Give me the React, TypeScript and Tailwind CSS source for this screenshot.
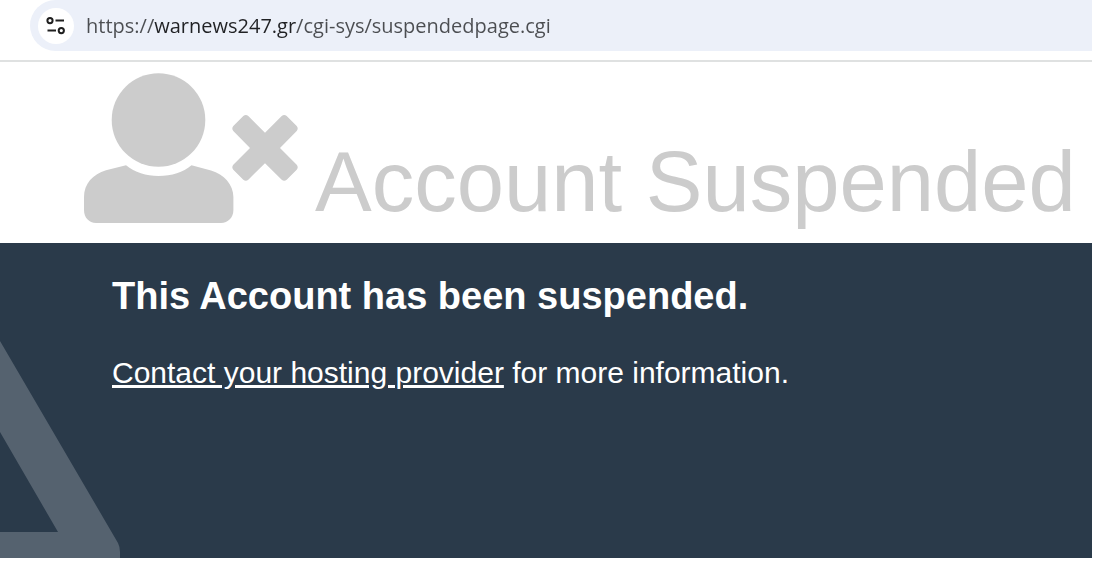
import type { SVGProps } from "react";

const PAGE_URL = "https://warnews247.gr/cgi-sys/suspendedpage.cgi";

function SiteSettingsIcon(props: SVGProps<SVGSVGElement>) {
  return (
    <svg viewBox="0 0 20 18" fill="none" stroke="currentColor" strokeWidth="2" aria-hidden="true" {...props}>
      <circle cx="4" cy="3.6" r="2.6" />
      <path d="M9.5 3.6H18M1.500 13.600h8.500" />
      <circle cx="15.3" cy="13.6" r="2.6" />
    </svg>
  );
}

function UserTimesIcon(props: SVGProps<SVGSVGElement>) {
  return (
    <svg viewBox="0 0 214 151" fill="currentColor" aria-hidden="true" {...props}>
      <circle cx="74.5" cy="48" r="46.8" />
      <path d="M42 93.3 C51 100.500 62 104 74.500 104 C88 104 99 100.500 107.500 93.300 L127 98.500 C140 102.500 149.400 112.500 149.400 125 V138 C149.400 145.500 144 151 137 151 H12 C5 151 0 145.500 0 138 V125 C0 112 9 102 22 98.300 Z" />
      <path d="M159.300 44 Q161.800 42 164.300 44 L181 60.700 L197.700 44 Q200.200 42 202.700 44 L212.700 54 Q214.700 56.500 212.700 59 L196 76 L212.700 92.700 Q214.700 95.200 212.700 97.700 L202.700 107.700 Q200.200 109.700 197.700 107.700 L181 91.200 L164.300 107.700 Q161.800 109.700 159.300 107.700 L149.300 97.700 Q147.300 95.200 149.300 92.700 L166 76 L149.300 59 Q147.300 56.500 149.300 54 Z" />
    </svg>
  );
}

function AddressBar() {
  return (
    <div className="border-b-2 border-[#dfe1e1] pb-[9px] pl-[30px]">
      <div className="flex h-[51px] items-center rounded-l-full bg-[#ecf0f9] pl-2">
        <button
          type="button"
          aria-label="View site information"
          className="flex size-9 shrink-0 items-center justify-center rounded-full bg-white text-[#1f1f1f]"
        >
          <SiteSettingsIcon className="h-[18px] w-5" />
        </button>
        {/* host part of the address is darker than the scheme and path */}
        <input
          type="text"
          aria-label="Address"
          readOnly
          defaultValue={PAGE_URL}
          className="ml-3 min-w-0 flex-1 bg-[linear-gradient(90deg,#4b4d51_68px,#202124_68px,#202124_210px,#4b4d51_210px)] bg-clip-text font-['Open_Sans','Noto_Sans',sans-serif] text-[20px] leading-8 text-transparent outline-none"
        />
      </div>
    </div>
  );
}

export default function App() {
  return (
    <div className="bg-white pr-3 font-['Liberation_Sans',Arial,sans-serif]">
      <AddressBar />

      <header className="flex items-end pt-[10px] pb-5 pl-[84px] text-[#cccccc]">
        <UserTimesIcon className="h-[151px] w-[214px] shrink-0" />
        <h1 className="ml-[17px] text-[85px] leading-[82px] whitespace-nowrap">Account Suspended</h1>
      </header>

      <main className="relative overflow-hidden bg-[#2a3a4a] px-28 pt-8 pb-[165px] text-white">
        <svg
          viewBox="0 0 120 217"
          fill="#55626f"
          aria-hidden="true"
          className="absolute bottom-0 left-0 h-[217px] w-[120px]"
        >
          <path d="M0 0 L118 202 Q120 206 120 211 V217 H0 V191 H58 L0 91 Z" />
        </svg>
        <div className="relative">
          <h2 className="text-[38px] leading-[42px] font-bold">This Account has been suspended.</h2>
          <p className="mt-9 text-[30px] leading-[40px]">
            <a href="#contact" className="underline decoration-[3px]">
              Contact your hosting provider
            </a>{" "}
            for more information.
          </p>
        </div>
      </main>
    </div>
  );
}
